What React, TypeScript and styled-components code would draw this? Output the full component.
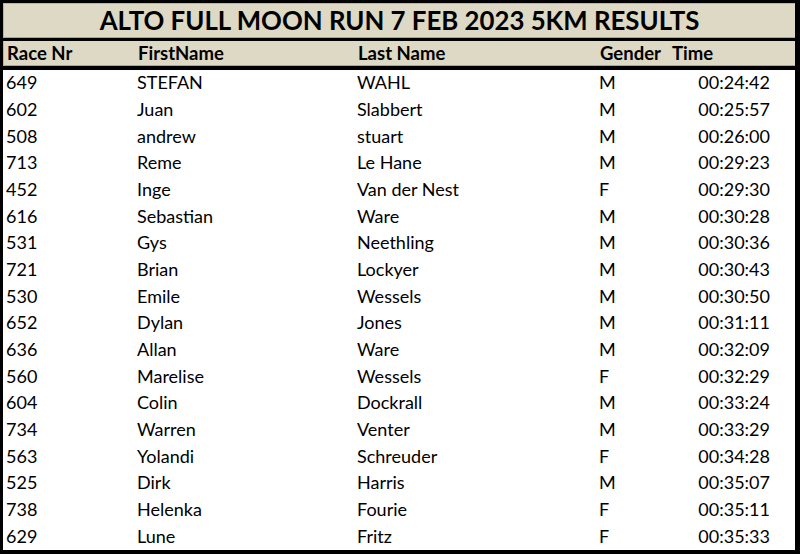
import React from 'react';
import styled, { createGlobalStyle } from 'styled-components';

const GlobalStyle = createGlobalStyle`
  html, body {
    margin: 0;
    padding: 0;
    background: #000;
  }
  * {
    box-sizing: border-box;
  }
`;

const Sheet = styled.div`
  width: 800px;
  height: 554px;
  background: #000;
  border-style: solid;
  border-color: #000;
  border-width: 3px 5px 4px 3px;
  display: flex;
  flex-direction: column;
  font-family: Lato, "Open Sans", sans-serif;
  color: #000;
`;

const TitleBar = styled.div`
  height: 35px;
  background: #ddd9c4;
  border-top: 1px solid #b8b6ab;
  border-left: 1px solid #b8b6ab;
  border-bottom: 1px solid #a9a697;
  display: flex;
  align-items: center;
  justify-content: center;
  font-size: 25.8px;
  font-weight: 700;
  padding-bottom: 1px;
`;

const HeaderRow = styled.div`
  margin-top: 3px;
  height: 25px;
  background: #ddd9c4;
  border-left: 1px solid #b8b6ab;
  border-bottom: 1px solid #a9a697;
  display: grid;
  grid-template-columns: 131px 220px 242px 72px 1fr;
  align-items: center;
  font-size: 18.5px;
  font-weight: 700;
  margin-bottom: 4px;
`;

const Body = styled.div`
  flex: 1;
  background: #fff;
  display: grid;
  grid-template-rows: repeat(18, 1fr);
`;

const Row = styled.div`
  display: grid;
  grid-template-columns: 131px 220px 242px 72px 1fr;
  align-items: center;
  font-size: 18px;
  padding-bottom: 2px;
`;

const Cell = styled.div<{ $right?: boolean }>`
  padding-left: ${p => (p.$right ? '0' : '3px')};
  padding-right: ${p => (p.$right ? '25px' : '0')};
  text-align: ${p => (p.$right ? 'right' : 'left')};
  white-space: nowrap;
  line-height: 1;
`;

type Result = [string, string, string, string, string];

const results: Result[] = [
  ['649', 'STEFAN', 'WAHL', 'M', '00:24:42'],
  ['602', 'Juan', 'Slabbert', 'M', '00:25:57'],
  ['508', 'andrew', 'stuart', 'M', '00:26:00'],
  ['713', 'Reme', 'Le Hane', 'M', '00:29:23'],
  ['452', 'Inge', 'Van der Nest', 'F', '00:29:30'],
  ['616', 'Sebastian', 'Ware', 'M', '00:30:28'],
  ['531', 'Gys', 'Neethling', 'M', '00:30:36'],
  ['721', 'Brian', 'Lockyer', 'M', '00:30:43'],
  ['530', 'Emile', 'Wessels', 'M', '00:30:50'],
  ['652', 'Dylan', 'Jones', 'M', '00:31:11'],
  ['636', 'Allan', 'Ware', 'M', '00:32:09'],
  ['560', 'Marelise', 'Wessels', 'F', '00:32:29'],
  ['604', 'Colin', 'Dockrall', 'M', '00:33:24'],
  ['734', 'Warren', 'Venter', 'M', '00:33:29'],
  ['563', 'Yolandi', 'Schreuder', 'F', '00:34:28'],
  ['525', 'Dirk', 'Harris', 'M', '00:35:07'],
  ['738', 'Helenka', 'Fourie', 'F', '00:35:11'],
  ['629', 'Lune', 'Fritz', 'F', '00:35:33'],
];

const App: React.FC = () => {
  return (
    <>
      <GlobalStyle />
      <Sheet>
        <TitleBar>ALTO FULL MOON RUN 7 FEB 2023 5KM RESULTS</TitleBar>
        <HeaderRow>
          <Cell>Race Nr</Cell>
          <Cell>FirstName</Cell>
          <Cell>Last Name</Cell>
          <Cell>Gender</Cell>
          <Cell>Time</Cell>
        </HeaderRow>
        <Body>
          {results.map(r => (
            <Row key={r[0]}>
              <Cell>{r[0]}</Cell>
              <Cell>{r[1]}</Cell>
              <Cell>{r[2]}</Cell>
              <Cell>{r[3]}</Cell>
              <Cell $right>{r[4]}</Cell>
            </Row>
          ))}
        </Body>
      </Sheet>
    </>
  );
};

export default App;
